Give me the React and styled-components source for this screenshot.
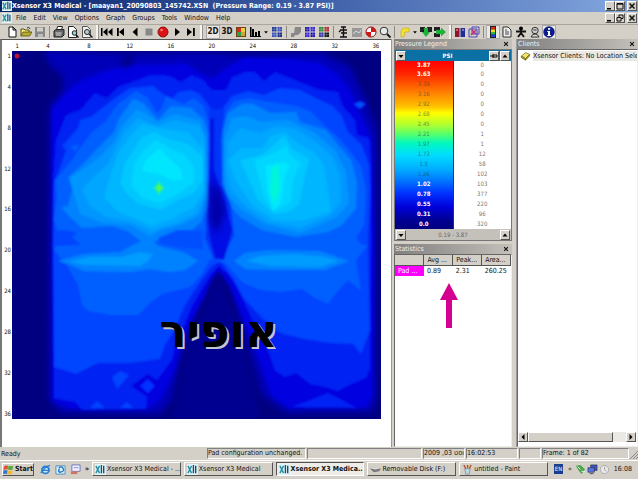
import React from "react";
import styled, { createGlobalStyle, css } from "styled-components";

const GlobalStyle = createGlobalStyle`
  * {
    box-sizing: border-box;
  }
  body {
    margin: 0;
    background: #d4d0c8;
    color: #111;
    font: 7px/10px "DejaVu Sans Condensed", "DejaVu Sans", sans-serif;
  }
  button {
    font: inherit;
    color: inherit;
    padding: 0;
    border: 0;
    background: none;
  }
`;

const raised = css`
  background: #d4d0c8;
  border: 1px solid;
  border-color: #fff #555 #555 #fff;
`;

const sunken = css`
  border: 1px solid;
  border-color: #808080 #fff #fff #808080;
`;

const Window = styled.div`
  min-height: 100vh;
  display: flex;
  flex-direction: column;
`;

const TitleBar = styled.header`
  display: flex;
  align-items: center;
  height: 12px;
  padding: 0 1px 0 2px;
  color: #fff;
  background: linear-gradient(90deg, #0a246a, #3f60a8 50%, #84a8e0);
  h1 {
    flex: 1;
    margin: 0;
    font: bold 7px/12px "DejaVu Sans Condensed", "DejaVu Sans", sans-serif;
    white-space: pre;
    overflow: hidden;
  }
`;

const MenuBar = styled.nav`
  display: flex;
  align-items: center;
  height: 12px;
  padding: 0 1px 0 2px;
`;

const MenuItem = styled.button`
  padding: 0 3px 0 4px;
`;

const WindowButtons = styled.div`
  display: flex;
  margin-left: auto;
  color: #111;
  button:last-child {
    margin-left: 2px;
  }
`;

const SmallButton = styled.button`
  ${raised}
  display: flex;
  align-items: center;
  justify-content: center;
  width: 10px;
  height: 10px;
  flex: none;
  svg {
    width: 8px;
    height: 8px;
    flex: none;
  }
`;

const Toolbar = styled.div`
  display: flex;
  align-items: center;
  height: 15px;
  padding-left: 5px;
  border-top: 1px solid #aaa69e;
`;

const Tool = styled.button`
  display: flex;
  align-items: center;
  justify-content: center;
  width: ${(p) => (p.$narrow ? "8px" : "14px")};
  height: 14px;
  flex: none;
  ${(p) =>
    p.$pressed &&
    css`
      background: #ebe9e4;
      border: 1px solid #aaa;
    `}
  svg {
    flex: none;
    width: ${(p) => (p.$narrow ? "6px" : "12px")};
    height: 12px;
  }
  font-weight: bold;
  font-size: 8px;
`;

const Separator = styled.span`
  width: 1px;
  height: 12px;
  margin: 0 2px;
  background: #8b8882;
  flex: none;
`;

const Grip = styled.span`
  width: 3px;
  height: 14px;
  margin: 0 ${(p) => (p.$wide ? "3px" : "1px")} 0 2px;
  background: #f5f4f0;
  border-right: 1px solid #99958e;
  flex: none;
`;

const Workspace = styled.main`
  flex: 1;
  display: grid;
  grid-template-columns: minmax(0, 1fr) 125px 122px;
`;

const MapPanel = styled.section`
  background: #fff;
  border-left: 2px solid #777;
  border-top: 1px solid #555;
  padding: 0 10px 28px 0;
  display: grid;
  grid-template: 11px auto / 10px minmax(0, 1fr);
  align-content: start;
  font-size: 6px;
  line-height: 8px;
`;

const TopAxis = styled.div`
  grid-column: 2;
  display: grid;
  grid-template-columns: repeat(36, minmax(0, 1fr));
  align-items: center;
`;

const LeftAxis = styled.div`
  display: grid;
  grid-template-rows: repeat(36, minmax(0, 1fr));
  align-items: center;
`;

const Tick = styled.span`
  display: flex;
  align-items: center;
  height: 0;
  ${(p) =>
    p.$vertical
      ? css`
          grid-row: ${p.$at};
          justify-content: flex-end;
          padding-right: 1px;
        `
      : css`
          grid-column: ${p.$at};
          justify-content: center;
        `}
`;

const MapArea = styled.div`
  position: relative;
  svg {
    display: block;
    width: 100%;
    height: auto;
  }
`;

const MapName = styled.div`
  position: absolute;
  left: 40%;
  top: 70%;
  font: bold 45px/46px "DejaVu Sans", sans-serif;
  color: #000;
  text-shadow: 2px 2px 0 #c4c4cc;
`;

const Dock = styled.aside`
  display: flex;
  flex-direction: column;
  padding: 0 4px 0 2px;
  border-left: 1px solid #999;
`;

const PanelTitle = styled.div`
  display: flex;
  align-items: center;
  justify-content: space-between;
  height: 10px;
  padding: 0 3px 0 1px;
  color: #f0f0f0;
  background: linear-gradient(90deg, #808080, #c4c0ba);
  h2 {
    margin: 0;
    font-size: 7px;
    font-weight: normal;
  }
  button {
    color: #111;
    display: flex;
  }
  svg {
    width: 6px;
    height: 6px;
  }
`;

const PanelBody = styled.div`
  flex: 1;
  background: #fff;
  border: 1px solid #777;
  border-color: #666 #eee #eee #666;
`;

const Legend = styled.section`
  border: 1px solid #777;
  margin-bottom: 3px;
`;

const LegendBar = styled.div`
  display: flex;
  align-items: center;
  gap: 1px;
  height: 11px;
  padding: 0 1px;
  background: ${(p) => (p.$footer ? "#c4c1bb" : "#0b70a4")};
  color: ${(p) => (p.$footer ? "#666" : "#fff")};
  font-size: 6px;
  font-weight: ${(p) => (p.$footer ? "normal" : "bold")};
  span {
    flex: 1;
    text-align: center;
  }
`;

const LegendTable = styled.table`
  width: 100%;
  border-collapse: collapse;
  table-layout: fixed;
  font-size: 6px;
  line-height: 8px;
  text-align: center;
  color: #777;
  background: linear-gradient(
      #f00 0,
      #ff2800 8%,
      #ff8a00 20%,
      #ffc000 27%,
      #ff0 31%,
      #b0ff30 38%,
      #50ff70 44%,
      #00f8c0 49%,
      #00dcff 56%,
      #00b0ff 64%,
      #0078ff 71%,
      #0030ff 79%,
      #0000d8 87%,
      #000090 95%,
      #000080 100%
    )
    0 0 / 50% 100% no-repeat #fff;
  td {
    height: 10px;
    padding: 0;
  }
  tr:first-child td {
    height: 8px;
  }
  td:first-child {
    border-right: 1px solid #333;
    color: rgba(50, 60, 60, 0.6);
  }
  tr.light td:first-child {
    color: #fff;
    font-weight: bold;
  }
`;

const StatsTable = styled.table`
  width: 100%;
  border-collapse: collapse;
  table-layout: fixed;
  th,
  td {
    height: 10px;
    padding: 0 0 0 3px;
    text-align: left;
    font-weight: normal;
    white-space: nowrap;
    overflow: hidden;
  }
  thead th {
    background: #d4d0c8;
    border-right: 1px solid #555;
    border-bottom: 1px solid #555;
  }
  tbody th {
    background: #f0f;
    color: #fff;
  }
`;

const Arrow = styled.svg`
  display: block;
  width: 18px;
  height: 45px;
  margin: 7px 0 0 45px;
`;

const Clients = styled.section`
  display: flex;
  flex-direction: column;
  border-left: 1px solid #999;
`;

const ClientsBody = styled(PanelBody)`
  display: flex;
  flex-direction: column;
  justify-content: space-between;
  overflow: hidden;
`;

const ClientItem = styled.div`
  display: flex;
  align-items: center;
  gap: 2px;
  padding: 1px 0 0 2px;
  white-space: nowrap;
  overflow: hidden;
  svg {
    width: 11px;
    height: 10px;
    flex: none;
  }
  span {
    background: #eae8e2;
  }
`;

const ScrollBar = styled.div`
  display: flex;
  height: 10px;
  margin: 0 1px 4px 0;
  background: #ebe9e4;
`;

const Thumb = styled.div`
  ${raised}
  width: 85px;
  margin-right: auto;
`;

const StatusBar = styled.footer`
  display: grid;
  grid-template-columns: minmax(0, 1fr) 99px 115px 42px 52px 22px 87px 8px;
  gap: 1px;
  height: 13px;
  padding: 1px 0 1px 1px;
  align-items: center;
  span {
    overflow: hidden;
    white-space: nowrap;
  }
  bdi {
    display: inline-block;
  }
`;

const Pane = styled.span`
  ${sunken}
  height: 11px;
  line-height: 9px;
`;

const TaskBar = styled.div`
  display: flex;
  align-items: center;
  gap: 3px;
  height: 19px;
  padding: 1px 3px 3px 2px;
  border-top: 1px solid #fff;
  svg {
    width: 11px;
    height: 11px;
    flex: none;
  }
`;

const StartButton = styled.button`
  ${raised}
  display: flex;
  align-items: center;
  gap: 1px;
  width: 32px;
  height: 13px;
  font-weight: bold;
  flex: none;
`;

const QuickLaunch = styled.div`
  display: flex;
  align-items: center;
  justify-content: space-between;
  width: 52px;
  padding-left: 3px;
  font-weight: bold;
`;

const Task = styled.button`
  ${raised}
  flex: 1 1 0;
  min-width: 0;
  height: 14px;
  padding: 0 1px 0 2px;
  display: flex;
  align-items: center;
  gap: 1px;
  white-space: nowrap;
  overflow: hidden;
  ${(p) =>
    p.$active &&
    css`
      background: #eeece7;
      border-color: #555 #fff #fff #555;
      font-weight: bold;
    `}
`;

const Tray = styled.div`
  display: flex;
  align-items: center;
  gap: 1px;
  width: 81px;
  margin-left: 3px;
  padding-right: 3px;
  flex: none;
  b {
    width: 9px;
    background: #173f8f;
    color: #fff;
    font-size: 6px;
    font-weight: normal;
    text-align: center;
  }
  time {
    margin-left: auto;
  }
  > span {
    margin: 0 2px 0 4px;
  }
`;

const Svg = ({ children, box = "0 0 12 12", ...rest }) => (
  <svg viewBox={box} aria-hidden="true" {...rest}>
    {children}
  </svg>
);

const AppIcon = () => (
  <Svg width="10" height="10">
    <path d="M0 0h12v12H0z" fill="#dff3f5" />
    <path d="M1 2l4 8M5 2L1 10" stroke="#2a91a5" strokeWidth="1.6" />
    <path d="M7 1v9M9.500 2v8" stroke="#174d78" strokeWidth="1.5" />
  </Svg>
);

const Glyph = ({ name }) => (
  <Svg box="0 0 8 8">
    {name === "min" && <path d="M1 6h4v1.500H1z" />}
    {name === "max" && (
      <path d="M1 1.500h6v5.500H1zM1 2.200h6" fill="none" stroke="#111" />
    )}
    {name === "restore" && (
      <path d="M3 3V1h4v3.500H5M1 3.500h4V7H1z" fill="none" stroke="#111" />
    )}
    {name === "close" && (
      <path d="M1.500 1.500l5 5M6.500 1.500l-5 5" stroke="#111" strokeWidth="1.500" />
    )}
    {name === "down" && <path d="M1.500 3h5L4 6z" />}
    {name === "up" && <path d="M1.500 5.500h5L4 2.500z" />}
    {name === "left" && <path d="M5.500 1v6L2.500 4z" />}
    {name === "right" && <path d="M2.500 1v6l3-3z" />}
    {name === "pin" && (
      <path d="M0 4h3M3 2v4M3 3h4v2H3z" fill="none" stroke="#111" />
    )}
  </Svg>
);

const blocks = (a, b, c, d) => (
  <>
    <path d="M1 1h4.500v4.500H1z" fill={a} />
    <path d="M6.500 1H11v4.500H6.500z" fill={b} />
    <path d="M1 6.500h4.500V11H1z" fill={c} />
    <path d="M6.500 6.500H11V11H6.500z" fill={d} />
    <path d="M3.200 1v10M8.700 1v10M1 3.200h10M1 8.700h10" stroke="#cde" strokeWidth=".3" />
  </>
);

const icons = {
  New: <path d="M3 1h4l3 3v7H3zM7 1v3h3" fill="#fff" stroke="#111" />,
  Open: (
    <>
      <path d="M1 10V3h3l1 1h4v2" fill="#f7ee77" stroke="#554f10" />
      <path d="M1 10l2-4h9l-2.500 4z" fill="#b5ad2d" stroke="#554f10" strokeWidth=".8" />
      <path d="M7 2q2-2 3 1" fill="none" stroke="#111" strokeWidth=".8" />
    </>
  ),
  Save: (
    <>
      <path d="M1 1h10v10H1z" fill="#888" />
      <path d="M3 1.500h6v4H3z" fill="#d0cec8" />
      <path d="M4 8h5v3H4z" fill="#bbb" />
    </>
  ),
  Print: (
    <>
      <path d="M3.500 4l1-3.500h5L8.500 4" fill="#fff" stroke="#222" />
      <path d="M1 5l2-1.500h8V9L9 11H1z" fill="#666" stroke="#222" />
      <path d="M2.500 7h6M3 9h5" stroke="#ddd" />
    </>
  ),
  Preview: (
    <>
      <path d="M1.500.5h5l3 3v8h-8z" fill="#fff" stroke="#222" />
      <circle cx="7.500" cy="7" r="2.300" fill="#9cc" stroke="#222" />
      <path d="M9 9l2.500 2.500" stroke="#111" strokeWidth="1.500" />
    </>
  ),
  "Page zoom": (
    <>
      <path d="M1.500.5h5l3 3v8h-8z" fill="#eee" stroke="#555" />
      <circle cx="6" cy="6" r="2.500" fill="#bcc" stroke="#222" />
      <path d="M8 8l3.500 3.500" stroke="#222" strokeWidth="1.400" />
    </>
  ),
  First: <path d="M0 2h1.500v8H0zM6.500 2v8L2 6zM11.500 2v8L7 6z" />,
  Previous: <path d="M2 2h1.800v8H2zM9 2v8L4 6z" />,
  Back: <path d="M8.500 1.500v9L3.500 6z" />,
  Stop: <path d="M2.500 2.500h7v7h-7z" fill="#888" />,
  Record: (
    <>
      <circle cx="6" cy="6" r="5" fill="#dc1414" stroke="#8c1010" />
      <circle cx="4.500" cy="4" r="1.300" fill="#f77" />
    </>
  ),
  Play: <path d="M4 2v8l5-4z" />,
  Last: <path d="M2 2v8l5-4zM8 2h1.800v8H8z" />,
  Colors: (
    <>
      <path d="M1 1h10v10H1z" fill="#7a3d10" />
      <path d="M2 2h4v4H2z" fill="#d42c1c" />
      <path d="M6 2h4v4H6z" fill="#e7d44a" />
      <path d="M2 6h4v4H2z" fill="#2b9f45" />
      <path d="M6 6h4v4H6z" fill="#c8a43a" />
    </>
  ),
  Histogram: <path d="M1 1h1.500v9H12v1H1zM3 3h2v7H3zM6 6h2v4H6zM9 5h2v5H9z" />,
  Sensors: blocks("#203890", "#3952bc", "#3952bc", "#192d84"),
  Surface: <path d="M5 1h6v5L8 9H5l-1 2H1V7h3z" fill="#888" />,
  Cells: blocks("#2016a8", "#3b25d0", "#3b25d0", "#2016a8"),
  Group: blocks("#2d8f35", "#ba2b26", "#3931aa", "#111"),
  Calibrate: (
    <path d="M4 1h5M6.500 1v10M3 4h7M4 7h6M3 11h7M4 4L2 6" fill="none" stroke="#111" strokeWidth="1.400" />
  ),
  Image: (
    <>
      <path d="M1 2h10v9H1z" fill="#999" />
      <path d="M2 8l3-3 3 2 2-3" fill="none" stroke="#ddd" />
    </>
  ),
  Center: (
    <>
      <circle cx="6" cy="6" r="5" fill="#fff" stroke="#811" />
      <path d="M6 6V1a5 5 0 0 1 5 5zM6 6v5a5 5 0 0 1-5-5z" fill="#d31717" />
    </>
  ),
  Zoom: (
    <>
      <circle cx="5" cy="5" r="3.800" fill="#e5eaea" stroke="#333" />
      <path d="M8 8l3.500 3.500" stroke="#111" strokeWidth="1.800" />
    </>
  ),
  Note: (
    <path d="M3 11V5l2-3h6v4H7l-1 5z" fill="#f3e034" stroke="#c4a613" strokeWidth=".6" />
  ),
  Import: (
    <>
      <path d="M0 1h5v5H0zM7 1h5v5H7z" fill="#222" />
      <path d="M4 2h4v4h2l-4 5-4-5h2z" fill="#19b438" />
    </>
  ),
  Export: (
    <>
      <path d="M0 1h6v4H0zM0 7h6v4H0z" fill="#222" />
      <path d="M2 4h5V1.500L12 6l-5 4.500V8H2z" fill="#19b438" />
    </>
  ),
  Compare: (
    <>
      <path d="M1 2h4.500v9H1z" fill="#8c1830" />
      <path d="M6.500 2H11v9H6.500z" fill="#202c98" />
      <path d="M2 4h2M8 4h2" stroke="#fbb" />
    </>
  ),
  Overlay: (
    <>
      <path d="M1 3h8v8H1zM4 1h7v7H4z" fill="none" stroke="#5046b8" />
      <path d="M3 9l5-5M4 4l4 4" stroke="#c02b70" strokeWidth="1.400" />
    </>
  ),
  Legend: (
    <>
      <path d="M3 0h6v12H3z" fill="#222" />
      <path d="M4 1h4v2.500H4z" fill="#e3261a" />
      <path d="M4 3.500h4V6H4z" fill="#f0df1e" />
      <path d="M4 6h4v2.500H4z" fill="#22bd42" />
      <path d="M4 8.500h4V11H4z" fill="#2140d8" />
    </>
  ),
  Report: (
    <>
      <path d="M2 1h5l3 3v7H2z" fill="#eee" stroke="#333" />
      <path d="M4 4h2M4 6h4M4 8h4" stroke="#444" />
    </>
  ),
  Body: (
    <>
      <circle cx="6" cy="2.500" r="2" />
      <path d="M1 5.500h10M6 4v4M6 7l-3 4M6 7l3 4" stroke="#111" strokeWidth="1.900" />
    </>
  ),
  Client: (
    <>
      <circle cx="6" cy="4.500" r="3.200" fill="#ccc" stroke="#333" />
      <path d="M2 11q1-3 4-3t4 3zM4.500 4h3" fill="#ddd" stroke="#333" />
    </>
  ),
  Info: (
    <>
      <circle cx="6" cy="6" r="5.700" fill="#0c1c88" />
      <path d="M5 2h2.200v1.800H5zM4.300 5H7v4h1v1H4.200V9H5V6h-.7z" fill="#fff" />
    </>
  ),
};

const toolbar = [
  "New", "Open", "Save", "|", "Print", "Preview", "Page zoom", "||",
  "First", "Previous", "Back", "Stop", "Record", "Play", "Last", "|||",
  "2D", "3D", "Colors", "Histogram", "v", "Sensors", "|",
  "Surface", "Cells", "Group", "|",
  "Calibrate", "Image", "Center", "Zoom", "|",
  "Note", "v", "Import", "Export", "||", "Compare", "Overlay", "|",
  "Legend", "Report", "Body", "Client", "Info",
];

const ticks = [1, 4, 8, 12, 16, 20, 24, 28, 32, 36];

// [value, number of cells, light label]
const legend = [
  ["3.87", 0, true],
  ["3.63", 0, true],
  ["3.39", 0],
  ["3.16", 0],
  ["2.92", 0],
  ["2.68", 0],
  ["2.45", 0],
  ["2.21", 1],
  ["1.97", 1],
  ["1.73", 12],
  ["1.5", 58],
  ["1.26", 102],
  ["1.02", 103, true],
  ["0.78", 377, true],
  ["0.55", 220, true],
  ["0.31", 96, true],
  ["0.0", 320, true],
];

// contour bands, lowest pressure first
const contours = [
  ["#0000e0", "53,400 52,190 52,160 52,110 66,94 80,82 100,74 125,66 160,66 185,64 200,74 212,80 225,70 245,58 290,60 320,64 338,76 350,92 362,120 371,140 373,240 372,395 366,407 290,408 272,395 262,365 250,335 240,310 230,285 219,269 211,279 202,300 188,326 180,348 172,375 160,398 148,408 70,408"],
  ["#0022f2", "54,398 53,185 56,140 66,115 80,110 95,93 107,98 118,87 140,79 150,75 170,76 181,82 192,75 203,80 212,90 226,90 232,77 245,72 255,72 264,81 275,72 300,82 320,90 338,92 342,105 355,120 357,135 369,138 371,165 371,245 370,300 370,368 366,378 352,384 338,391 325,387 310,384 296,373 285,377 275,371 270,355 258,332 246,306 235,281 219,266 211,274 202,289 192,306 184,326 176,342 172,360 160,376 147,395 146,409 82,410 75,402"],
  ["#0044ff", "54,367 53,245 54,185 66,150 62,146 78,128 80,120 92,116 115,98 130,88 153,86 163,94 172,99 178,92 191,90 200,94 206,102 212,110 222,109 232,96 248,91 264,95 280,88 300,90 320,100 333,106 342,116 348,132 362,145 369,165 370,190 368,245 370,330 361,354 353,344 330,343 304,339 280,333 262,318 244,299 230,274 220,261 210,268 198,285 184,307 175,330 165,345 160,359 130,363 98,363 76,374"],
  ["#0060ff", "54,250 59,238 54,220 57,195 55,180 72,160 80,148 92,132 105,122 118,104 136,91 147,97 157,113 162,108 166,96 183,104 194,98 203,106 208,120 209,145 208,200 206,238 215,260 224,260 232,236 222,204 221,140 226,112 234,101 250,98 263,101 296,106 310,111 326,127 338,137 349,150 361,166 366,190 364,225 356,238 362,245 368,245 356,260 361,291 348,280 337,292 328,304 315,298 302,289 280,292 260,290 243,283 225,263 210,259 202,274 190,287 162,294 150,303 138,315 110,315 88,311 82,305 78,285 68,267"],
  ["#0082ff", "61,207 68,206 73,188 69,177 84,163 101,145 114,132 119,119 133,99 143,103 158,120 171,106 191,108 204,120 208,133 208,205 201,222 191,231 160,239 150,244 142,242 129,232 112,226 82,228 69,216"],
  ["#0082ff", "223,184 223,130 228,113 242,104 253,104 270,113 296,112 300,122 326,130 338,145 351,160 357,182 356,208 342,225 328,232 295,237 262,230 240,217 226,201"],
  ["#0096ff", "69,178 85,168 101,156 114,142 122,126 136,110 144,112 157,122 175,114 200,121 206,138 207,195 199,216 180,225 160,230 150,236 130,225 103,223 80,214 73,191"],
  ["#0096ff", "224,175 224,140 232,118 246,116 262,122 287,120 315,133 335,150 346,172 349,203 337,217 300,233 265,224 241,209 227,194"],
  ["#00a6ff", "82,190 92,178 108,164 116,147 124,132 138,118 157,126 175,120 200,126 205,140 205,195 197,213 180,222 152,231 132,222 106,217 90,206"],
  ["#00a6ff", "226,170 228,142 240,128 260,133 276,126 296,129 315,141 332,156 340,175 341,203 329,216 300,228 268,222 245,206 231,190"],
  ["#00b6ff", "104,198 110,176 118,153 130,136 142,124 165,129 188,132 204,150 204,190 195,207 170,220 150,226 137,219 118,212"],
  ["#00b6ff", "228,160 241,148 262,148 270,136 284,132 301,145 314,152 324,165 328,190 331,212 301,221 274,220 252,205 236,181"],
  ["#00c8ff", "120,184 125,163 134,150 141,138 154,132 168,139 188,144 202,156 203,180 194,193 176,201 161,210 139,204 127,194"],
  ["#00c8ff", "240,160 262,155 284,136 292,149 309,159 304,180 299,205 288,212 274,214 258,200 249,180"],
  ["#00d6ff", "131,185 134,164 144,150 156,140 170,148 186,156 194,168 194,182 178,194 160,203 142,198"],
  ["#00d6ff", "254,161 272,154 286,146 292,157 301,163 293,180 291,202 274,212 264,196"],
  ["#00e6ff", "142,168 148,158 160,148 165,155 180,168 183,179 174,181 160,174 145,172"],
  ["#00e6ff", "265,165 284,162 290,165 285,175 281,203 273,211 268,194"],
  ["#00f4d8", "272,168 278,164 280,190 274,204 270,192"],
  ["#0082ff", "58,261 83,254 120,252 135,244 149,238 158,246 170,249 185,253 198,261 185,270 170,272 150,269 130,272 84,271 73,266"],
  ["#009cff", "69,262 88,257 120,257 140,252 153,254 148,261 140,266 84,265"],
  ["#0082ff", "234,261 245,253 270,250 320,251 349,261 325,270 270,270 245,269"],
  ["#009cff", "246,261 260,256 295,254 325,257 339,261 320,267 270,266"],
  ["#0060ff", "70,147 79,144 76,152"],
  ["#0050ff", "354,104 360,101 366,104 360,109"],
  ["#0044ff", "112,377 120,371 129,375 117,389"],
  ["#0000e0", "131,386 148,374 165,386 148,397"],
  ["#0030ff", "140,386 148,379 155,386 148,393"],
  ["#0044ff", "90,408 97,401 105,408"],
  ["#0044ff", "120,408 127,402 133,408"],
  ["#0024f4", "292,407 328,393 357,408"],
  ["#0044ff", "63,230 80,233 83,240 81,245 54,246 54,231"],
  ["#0060ff", "82,229 112,231 123,244 87,250 72,237"],
  ["#0050ff", "158,238 177,230 203,230 203,250 180,248 160,244"],
];

const Contour = ({ points, color }) => <polygon points={points} fill={color} />;

const PressureMap = () => (
  <svg viewBox="12 51 369 368" role="img" aria-label="Pressure map">
    <defs>
      <filter id="soft" x="-10%" y="-10%" width="120%" height="120%">
        <feGaussianBlur stdDeviation="3" />
      </filter>
      <filter id="edge">
        <feGaussianBlur stdDeviation="1" />
      </filter>
    </defs>
    <path d="M12 51h369v368H12z" fill="#000080" />
    <g filter="url(#soft)">
      <polygon
        points="44,50 120,54 200,52 250,56 320,52 350,66 366,100 376,130 376,400 372,412 285,412 262,395 252,360 243,330 232,290 219,264 208,282 196,312 186,340 178,370 172,400 160,414 60,412 49,400 50,105 63,90 62,75 50,66"
        fill="#0000b8"
      />
      <Contour color={contours[0][0]} points={contours[0][1]} />
    </g>
    <g filter="url(#edge)">
      {contours.map(([color, points], i) => (
        <Contour key={i} color={color} points={points} />
      ))}
      <polygon
        points="209,108 216,110 224,108 221,140 222,184 231,205 234,235 222,260 214,260 205,238 208,200 209,150"
        fill="#0034f8"
      />
      <polygon
        points="210,118 214,118 214,170 225,200 232,230 224,260 215,258 209,235 208,200 210,150"
        fill="#0010e4"
      />
    </g>
    <g filter="url(#soft)">
      <path d="M211 182l9 8 5 22-8 22-8-14z" fill="#0000a8" />
      <path d="M218 276l10 22 10 30 12 35 10 56h-88l13-60 12-35 14-30z" fill="#000090" />
      <path d="M127 55l8 3-8 10-8-3z" fill="#000080" />
    </g>
    <path d="M159 181l6 7-6 7-6-7z" fill="#20e8b0" />
    <path d="M159 184l3 4-3 4-3-4z" fill="#50f860" />
    <circle cx="17" cy="56" r="2.500" fill="#c01030" />
  </svg>
);

const LegendPanel = () => (
  <>
    <PanelTitle>
      <h2>Pressure Legend</h2>
      <button aria-label="Close Pressure Legend">
        <Glyph name="close" />
      </button>
    </PanelTitle>
    <Legend>
      <LegendBar>
        <SmallButton aria-label="Lower units">
          <Glyph name="down" />
        </SmallButton>
        <span>PSI</span>
        <SmallButton aria-label="Pin">
          <Glyph name="pin" />
        </SmallButton>
        <SmallButton aria-label="Raise maximum">
          <Glyph name="up" />
        </SmallButton>
      </LegendBar>
      <LegendTable>
        <tbody>
          {legend.map(([value, count, light]) => (
            <tr key={value} className={light ? "light" : ""}>
              <td>{value}</td>
              <td>{count}</td>
            </tr>
          ))}
        </tbody>
      </LegendTable>
      <LegendBar $footer>
        <SmallButton aria-label="Lower range">
          <Glyph name="down" />
        </SmallButton>
        <span>0.19 - 3.87</span>
        <SmallButton aria-label="Raise range">
          <Glyph name="up" />
        </SmallButton>
      </LegendBar>
    </Legend>
  </>
);

const StatisticsPanel = () => (
  <>
    <PanelTitle>
      <h2>Statistics</h2>
      <button aria-label="Close Statistics">
        <Glyph name="close" />
      </button>
    </PanelTitle>
    <PanelBody>
      <StatsTable>
        <thead>
          <tr>
            <th />
            <th>Avg ...</th>
            <th>Peak...</th>
            <th>Area...</th>
          </tr>
        </thead>
        <tbody>
          <tr>
            <th>Pad ...</th>
            <td>0.89</td>
            <td>2.31</td>
            <td>260.25</td>
          </tr>
        </tbody>
      </StatsTable>
      <Arrow viewBox="0 0 18 45" aria-hidden="true">
        <path d="M9 0l9 17h-6v28H6V17H0z" fill="#d4008f" />
      </Arrow>
    </PanelBody>
  </>
);

const App = () => {
  return (
    <Window>
      <GlobalStyle />
      <TitleBar>
        <AppIcon />
        <h1>{"Xsensor X3 Medical - [maayan1_20090803_145742.XSN  (Pressure Range: 0.19 - 3.87 PSI)]"}</h1>
        <WindowButtons>
          {["min", "max", "close"].map((name) => (
            <SmallButton key={name} aria-label={name}>
              <Glyph name={name} />
            </SmallButton>
          ))}
        </WindowButtons>
      </TitleBar>
      <MenuBar>
        <AppIcon />
        {["File", "Edit", "View", "Options", "Graph", "Groups", "Tools", "Window", "Help"].map((item) => (
          <MenuItem key={item}>{item}</MenuItem>
        ))}
        <WindowButtons>
          {["min", "restore", "close"].map((name) => (
            <SmallButton key={name} aria-label={name + " document"}>
              <Glyph name={name} />
            </SmallButton>
          ))}
        </WindowButtons>
      </MenuBar>
      <Toolbar>
        {toolbar.map((item, i) => {
          if (item === "|") return <Separator key={i} />;
          if (item === "||") return <Grip key={i} />;
          if (item === "|||") return <Grip key={i} $wide />;
          if (item === "v") {
            return (
              <Tool key={i} $narrow aria-label="More">
                <Glyph name="down" />
              </Tool>
            );
          }
          return (
            <Tool
              key={i}
              aria-label={item}
              $pressed={item === "2D" || item === "Legend" || item === "Info"}
            >
              {icons[item] ? <Svg>{icons[item]}</Svg> : item}
            </Tool>
          );
        })}
      </Toolbar>

      <Workspace>
        <MapPanel>
          <TopAxis>
            {ticks.map((t) => (
              <Tick key={t} $at={t}>
                {t}
              </Tick>
            ))}
          </TopAxis>
          <LeftAxis>
            {ticks.map((t) => (
              <Tick key={t} $at={t} $vertical>
                {t}
              </Tick>
            ))}
          </LeftAxis>
          <MapArea>
            <PressureMap />
            <MapName dir="rtl" lang="he">
              אופיר
            </MapName>
          </MapArea>
        </MapPanel>

        <Dock>
          <LegendPanel />
          <StatisticsPanel />
        </Dock>

        <Clients>
          <PanelTitle>
            <h2>Clients</h2>
            <button aria-label="Close Clients">
              <Glyph name="close" />
            </button>
          </PanelTitle>
          <ClientsBody>
            <ClientItem>
              <Svg>
                <path d="M1 6l5-4 5 2-5 5z" fill="#f1e46a" stroke="#6e6715" strokeWidth=".8" />
                <path d="M1 6v2l5 3V9zM6 9l5-5v2l-5 5z" fill="#b2a528" stroke="#6e6715" strokeWidth=".8" />
              </Svg>
              <span>Xsensor Clients: No Location Selected</span>
            </ClientItem>
            <ScrollBar>
              <SmallButton aria-label="Scroll left">
                <Glyph name="left" />
              </SmallButton>
              <Thumb />
              <SmallButton aria-label="Scroll right">
                <Glyph name="right" />
              </SmallButton>
            </ScrollBar>
          </ClientsBody>
        </Clients>
      </Workspace>

      <StatusBar>
        <span>Ready</span>
        <Pane>Pad configuration unchanged.</Pane>
        <Pane />
        <Pane>
          <bdi dir="rtl">אוגוסט 03, 2009</bdi>
        </Pane>
        <Pane>16:02:53</Pane>
        <Pane />
        <Pane>Frame: 1 of 82</Pane>
        <Svg box="0 0 8 10">
          <path d="M0 10l8-8M3 10l5-5M6 10l2-2" stroke="#888" />
        </Svg>
      </StatusBar>

      <TaskBar>
        <StartButton>
          <Svg>
            <path d="M1 3q2-2 4.500-1L5 6Q3 5 .5 6.500z" fill="#e2502a" />
            <path d="M6 2q2.500 1 5 0l-.6 4q-2.400 1-5 0z" fill="#59a83a" />
            <path d="M.5 7Q3 6 5 7l-.6 4Q2 10 0 11z" fill="#3974cf" />
            <path d="M5.500 7q2.500 1 5 0L10 11q-2.500 1-5 0z" fill="#efbc28" />
          </Svg>
          Start
        </StartButton>
        <QuickLaunch>
          <Svg>
            <circle cx="6" cy="6.500" r="3.800" fill="#cde6f8" stroke="#2a7fcf" strokeWidth="2" />
            <path d="M3 7h7M1 10Q5 3 11 1.500" fill="none" stroke="#2a7fcf" strokeWidth="1.400" />
          </Svg>
          <Svg>
            <path d="M1 2h10v9H1z" fill="#d7effa" stroke="#4c8cbd" />
            <path d="M4 4q3-2 5 1T5 9Q3 7 5 5" fill="none" stroke="#2874b8" strokeWidth="1.400" />
          </Svg>
          <Svg>
            <path d="M2 1h9v7H2z" fill="#eef0ff" stroke="#6874bd" />
            <path d="M1 8h7v3H1z" fill="#ce7462" />
            <path d="M4 4h5" stroke="#7d8bd0" />
          </Svg>
          <span>»</span>
        </QuickLaunch>
        <Task>
          <AppIcon />
          Xsensor X3 Medical - ...
        </Task>
        <Task>
          <AppIcon />
          Xsensor X3 Medical
        </Task>
        <Task $active>
          <AppIcon />
          Xsensor X3 Medica...
        </Task>
        <Task>
          <Svg>
            <path d="M0 5l4-1 8 1-2 3-6 1z" fill="#777" />
            <path d="M0 5l4-1 8 1-6 1z" fill="#ddd" />
          </Svg>
          Removable Disk (F:)
        </Task>
        <Task>
          <Svg>
            <path d="M3 5h6l-1 6H4z" fill="#bed7dc" stroke="#668" strokeWidth=".6" />
            <path d="M4 5L2 1M6 5V1M8 5l2-4" stroke="#b6452c" strokeWidth="1.400" />
            <path d="M6 5l2-4" stroke="#d9ad31" />
          </Svg>
          untitled - Paint
        </Task>
        <Tray>
          <b>EN</b>
          <span>«</span>
          <Svg>
            <path d="M1 2l5-1 5 5-4 5-3-4z" fill="#4aa64a" />
            <path d="M3 3l3 3M7 8h4" stroke="#e6f4e6" />
          </Svg>
          <Svg>
            <path d="M4 1h7v6H4z" fill="#3c56c4" stroke="#223" strokeWidth=".6" />
            <path d="M1 4h7v5H1z" fill="#5874e0" stroke="#223" strokeWidth=".6" />
            <path d="M3 10.500h4" stroke="#445" />
          </Svg>
          <Svg>
            <circle cx="6" cy="6" r="4.500" fill="#e8e8e8" stroke="#aaa" />
            <path d="M6 3v3l2 2" fill="none" stroke="#999" />
          </Svg>
          <time>16:08</time>
        </Tray>
      </TaskBar>
    </Window>
  );
};

export default App;
